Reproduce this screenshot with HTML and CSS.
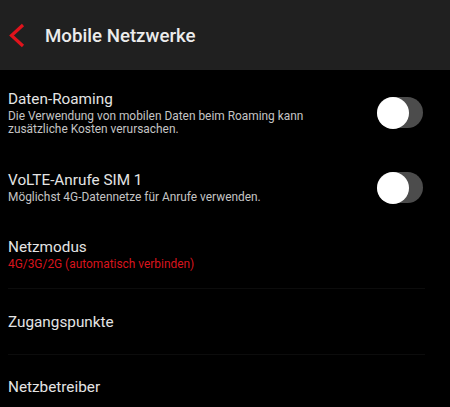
FILE: index.html
```html
<!DOCTYPE html>
<html lang="de">
<head>
<meta charset="utf-8">
<title>Mobile Netzwerke</title>
<link rel="stylesheet" href="styles.css">
</head>
<body>
<header class="appbar">
  <span class="back">
    <svg width="34" height="70" viewBox="0 0 34 70" aria-hidden="true">
      <polyline points="23,25 11.5,35.5 23,46" fill="none" stroke="#e0131c" stroke-width="3.2" stroke-linecap="butt" stroke-linejoin="miter"/>
    </svg>
  </span>
  <h1 class="title">Mobile Netzwerke</h1>
</header>
<main class="list">
  <div class="row row-roaming">
    <div class="text">
      <div class="label">Daten-Roaming</div>
      <div class="sub">Die Verwendung von mobilen Daten beim Roaming kann<br>zusätzliche Kosten verursachen.</div>
    </div>
    <span class="switch"><span class="knob"></span></span>
  </div>
  <div class="row row-volte">
    <div class="text">
      <div class="label">VoLTE-Anrufe SIM 1</div>
      <div class="sub">Möglichst 4G-Datennetze für Anrufe verwenden.</div>
    </div>
    <span class="switch"><span class="knob"></span></span>
  </div>
  <div class="row row-mode divided">
    <div class="text">
      <div class="label">Netzmodus</div>
      <div class="sub red">4G/3G/2G (automatisch verbinden)</div>
    </div>
  </div>
  <div class="row row-apn divided">
    <div class="text">
      <div class="label">Zugangspunkte</div>
    </div>
  </div>
  <div class="row row-op">
    <div class="text">
      <div class="label">Netzbetreiber</div>
    </div>
  </div>
</main>
</body>
</html>
```
FILE: styles.css
```css
html, body {
  margin: 0;
  padding: 0;
  background: #000;
}
body {
  font-family: Roboto, "Noto Sans", "Liberation Sans", sans-serif;
  color: #e6e6e6;
  width: 450px;
  height: 407px;
  overflow: hidden;
}
.appbar {
  height: 70px;
  background: #202020;
  display: flex;
  align-items: center;
}
.back {
  display: flex;
  width: 45px;
}
.title {
  margin: 0;
  padding-top: 1px;
  font-size: 18.7px;
  line-height: 24px;
  font-weight: 500;
  color: #ececec;
}
.list {
  display: flex;
  flex-direction: column;
}
.row {
  display: flex;
  align-items: center;
  justify-content: space-between;
  padding: 0 27px 0 8px;
  box-sizing: border-box;
}
.divided {
  position: relative;
}
.divided::after {
  content: "";
  position: absolute;
  left: 8px;
  right: 25px;
  bottom: 0;
  height: 1px;
  background: #0c0c0c;
}
.row-roaming { height: 85px; }
.row-volte { height: 65px; }
.row-mode { height: 69px; }
.row-apn { height: 66px; }
.row-op { height: 62px; padding-top: 1px; }
.text {
  display: flex;
  flex-direction: column;
}
.label {
  font-size: 15.3px;
  line-height: 20px;
  color: #e4e4e4;
}
.sub {
  font-size: 11.9px;
  line-height: 13.5px;
  color: #c4c4c4;
  margin-top: 1px;
}
.sub.red {
  color: #d8141d;
}
.switch {
  position: relative;
  width: 46px;
  height: 31px;
  border-radius: 16px;
  background: #4c4c4c;
  flex: none;
}
.knob {
  position: absolute;
  left: 0;
  top: -0.5px;
  width: 32px;
  height: 32px;
  border-radius: 50%;
  background: #fff;
}
```
